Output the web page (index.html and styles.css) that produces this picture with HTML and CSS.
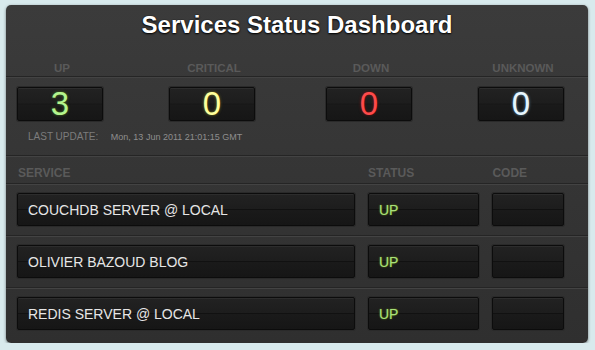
FILE: index.html
```html
<!DOCTYPE html>
<html lang="en">
<head>
  <meta charset="UTF-8" />
  <meta name="viewport" content="width=device-width, initial-scale=1.0"/>
  <title>Services Status Dashboard</title>
  <link rel="stylesheet" href="styles.css">
</head>
<body>
  <div class="panel">
    <h1>Services Status Dashboard</h1>

    <div class="stats-labels sep">
      <span>Up</span>
      <span>Critical</span>
      <span>Down</span>
      <span>Unknown</span>
    </div>
    <div class="stats">
      <div class="box counter up">3</div>
      <div class="box counter critical">0</div>
      <div class="box counter down">0</div>
      <div class="box counter unknown">0</div>
    </div>
    <div class="last-update sep">
      <span class="label">Last update:</span>
      <span class="date">Mon, 13 Jun 2011 21:01:15 GMT</span>
    </div>

    <div class="row head sep">
      <div class="col-service">Service</div>
      <div class="col-status">Status</div>
      <div class="col-code">Code</div>
    </div>
    <div class="row sep">
      <div class="box col-service">COUCHDB SERVER @ LOCAL</div>
      <div class="box col-status ok">UP</div>
      <div class="box col-code"></div>
    </div>
    <div class="row sep">
      <div class="box col-service">OLIVIER BAZOUD BLOG</div>
      <div class="box col-status ok">UP</div>
      <div class="box col-code"></div>
    </div>
    <div class="row">
      <div class="box col-service">REDIS SERVER @ LOCAL</div>
      <div class="box col-status ok">UP</div>
      <div class="box col-code"></div>
    </div>
  </div>
</body>
</html>
```

FILE: styles.css
```css
body {
  margin: 0;
  background: #d8eaed;
  font-family: 'Liberation Sans', Arial, sans-serif;
}
.panel {
  margin: 5px 0 0 6px;
  width: 582px;
  height: 338px;
  box-sizing: border-box;
  background: linear-gradient(#3b3b3b, #2f2f2f);
  border-radius: 5px;
  box-shadow: 0 1px 3px rgba(0,0,0,0.5);
  overflow: hidden;
}
h1 {
  margin: 0;
  padding-top: 6px;
  font-size: 24px;
  line-height: 28px;
  text-align: center;
  color: #fff;
  text-shadow: 0 1px 2px #000, 0 0 1px #000;
}
.sep {
  border-bottom: 1px solid #252525;
  box-shadow: 0 1px 0 #434343;
}
.stats-labels, .stats, .last-update, .row {
  padding-left: 11px;
  padding-right: 24px;
}
.stats-labels, .stats {
  display: grid;
  grid-template-columns: 152px 157px 152px 86px;
}
.stats-labels {
  margin-top: 23px;
  padding-bottom: 2px;
  font-size: 11.5px;
  line-height: 12px;
  font-weight: bold;
  text-transform: uppercase;
  color: #5a5a5a;
}
.stats-labels span {
  width: 90px;
  text-align: center;
}
.stats {
  margin-top: 10px;
}
.box {
  box-sizing: border-box;
  height: 34px;
  background: linear-gradient(#222 0, #1d1d1d 48%, #111 50%, #1a1a1a 52%, #161616 100%);
  border: 1px solid #0c0c0c;
  border-radius: 2px;
  box-shadow: 0 0 0 1px #2a2a2a, inset 0 1px 0 rgba(255,255,255,0.05);
}
.counter {
  width: 86px;
  font-size: 33px;
  line-height: 32px;
  text-align: center;
}
.up { color: #b4f58e; text-shadow: 0 0 3px #4a7a20; }
.critical { color: #ffff9c; text-shadow: 0 0 3px #7a7a20; }
.down { color: #ff4a4a; text-shadow: 0 0 3px #7a1010; }
.unknown { color: #e6f6ff; text-shadow: 0 0 3px #5a8aa8; }
.last-update {
  padding-top: 10px;
  padding-bottom: 12px;
  font-size: 9.5px;
  line-height: 11px;
  color: #7c7c7c;
}
.last-update .label {
  padding-left: 11px;
  font-size: 10px;
  text-transform: uppercase;
  margin-right: 10px;
}
.last-update .date {
  font-size: 9px;
  color: #8e8e8e;
}
.row {
  display: flex;
  gap: 13px;
  padding-top: 9px;
  padding-bottom: 9px;
}
.row .box {
  height: 33px;
  padding-left: 10px;
  font-size: 14px;
  line-height: 32px;
  color: #e6e6e6;
}
.row.head {
  padding-top: 10px;
  padding-bottom: 3px;
  font-size: 12px;
  line-height: 14px;
  font-weight: bold;
  text-transform: uppercase;
  color: #5a5a5a;
}
.head div {
  padding-left: 1px;
}
.col-service { width: 338px; }
.col-status { width: 111px; }
.col-code { width: 72px; }
.row .ok {
  color: #a8e07a;
  text-shadow: 0 0 2px #6a7a1c, 0 0 1px #3c6a1c;
}
```
